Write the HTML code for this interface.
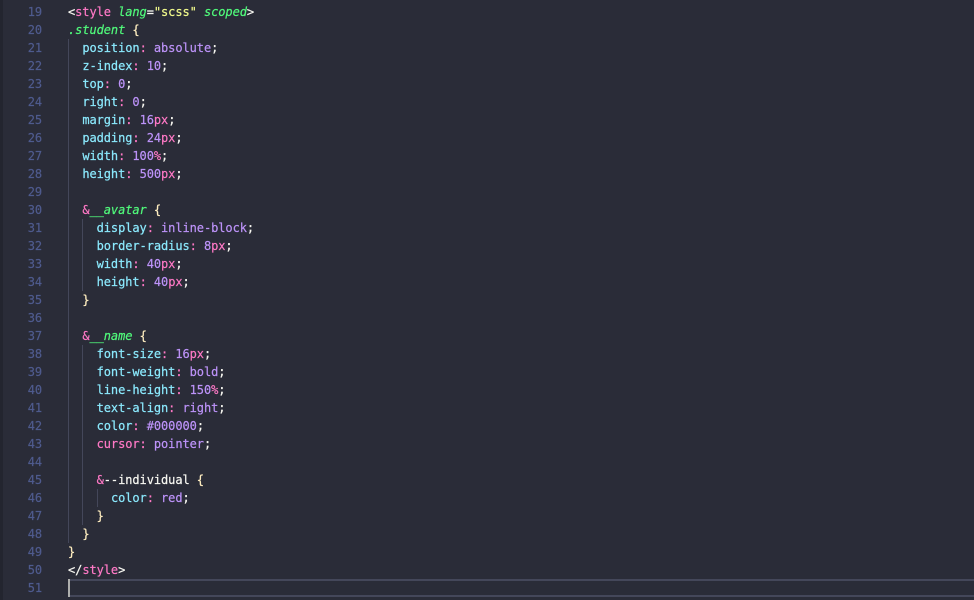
<!DOCTYPE html>
<html>
<head>
<meta charset="utf-8">
<style>
html,body{margin:0;padding:0;width:974px;height:600px;overflow:hidden;background:#2a2c38}
body{position:relative;font-family:"DejaVu Sans Mono","Liberation Mono",monospace;font-size:12px;line-height:18px;letter-spacing:-0.07px;-webkit-text-stroke:0.2px}
.strip{position:absolute;left:0;top:0;width:3px;height:600px;background:#23252f}
.n{position:absolute;left:14px;width:28px;text-align:right;color:#4f5b8e}
.l{position:absolute;left:68px;white-space:pre;color:#f8f8f2}
.c{color:#8be9fd}.v{color:#bd93f9}.p{color:#ff79c6}.g{color:#50fa7b;font-style:italic}.y{color:#f1fa8c}.o{color:#ffeec0}.w{color:#f8f8f2}
.guide{position:absolute;width:1px;background:#44475a}
.ab{position:absolute;left:70px;right:0;height:2px;background:#44475a}
.cur{position:absolute;left:68px;top:579px;width:2px;height:18px;background:#aeafad}
</style>
</head>
<body>
<div class="strip"></div>
<div class="guide" style="left:68px;top:39px;height:504px"></div>
<div class="guide" style="left:82px;top:219px;height:72px"></div>
<div class="guide" style="left:82px;top:345px;height:180px"></div>
<div class="guide" style="left:97px;top:489px;height:18px"></div>
<div class="ab" style="top:579px"></div>
<div class="ab" style="top:595px"></div>
<div class="cur"></div>

<div class="n" style="top:3px">19</div><div class="l" style="top:3px">&lt;<span class="p">style</span> <span class="g">lang</span>=<span class="y">"scss"</span> <span class="g">scoped</span>&gt;</div>
<div class="n" style="top:21px">20</div><div class="l" style="top:21px"><span class="g">.student</span> <span class="o">{</span></div>
<div class="n" style="top:39px">21</div><div class="l" style="top:39px">  <span class="c">position</span><span class="p">:</span> <span class="v">absolute</span>;</div>
<div class="n" style="top:57px">22</div><div class="l" style="top:57px">  <span class="c">z-index</span><span class="p">:</span> <span class="v">10</span>;</div>
<div class="n" style="top:75px">23</div><div class="l" style="top:75px">  <span class="c">top</span><span class="p">:</span> <span class="v">0</span>;</div>
<div class="n" style="top:93px">24</div><div class="l" style="top:93px">  <span class="c">right</span><span class="p">:</span> <span class="v">0</span>;</div>
<div class="n" style="top:111px">25</div><div class="l" style="top:111px">  <span class="c">margin</span><span class="p">:</span> <span class="v">16</span><span class="p">px</span>;</div>
<div class="n" style="top:129px">26</div><div class="l" style="top:129px">  <span class="c">padding</span><span class="p">:</span> <span class="v">24</span><span class="p">px</span>;</div>
<div class="n" style="top:147px">27</div><div class="l" style="top:147px">  <span class="c">width</span><span class="p">:</span> <span class="v">100</span><span class="p">%</span>;</div>
<div class="n" style="top:165px">28</div><div class="l" style="top:165px">  <span class="c">height</span><span class="p">:</span> <span class="v">500</span><span class="p">px</span>;</div>
<div class="n" style="top:183px">29</div>
<div class="n" style="top:201px">30</div><div class="l" style="top:201px">  <span class="p">&amp;</span><span class="g">__avatar</span> <span class="o">{</span></div>
<div class="n" style="top:219px">31</div><div class="l" style="top:219px">    <span class="c">display</span><span class="p">:</span> <span class="v">inline-block</span>;</div>
<div class="n" style="top:237px">32</div><div class="l" style="top:237px">    <span class="c">border-radius</span><span class="p">:</span> <span class="v">8</span><span class="p">px</span>;</div>
<div class="n" style="top:255px">33</div><div class="l" style="top:255px">    <span class="c">width</span><span class="p">:</span> <span class="v">40</span><span class="p">px</span>;</div>
<div class="n" style="top:273px">34</div><div class="l" style="top:273px">    <span class="c">height</span><span class="p">:</span> <span class="v">40</span><span class="p">px</span>;</div>
<div class="n" style="top:291px">35</div><div class="l" style="top:291px">  <span class="o">}</span></div>
<div class="n" style="top:309px">36</div>
<div class="n" style="top:327px">37</div><div class="l" style="top:327px">  <span class="p">&amp;</span><span class="g">__name</span> <span class="o">{</span></div>
<div class="n" style="top:345px">38</div><div class="l" style="top:345px">    <span class="c">font-size</span><span class="p">:</span> <span class="v">16</span><span class="p">px</span>;</div>
<div class="n" style="top:363px">39</div><div class="l" style="top:363px">    <span class="c">font-weight</span><span class="p">:</span> <span class="v">bold</span>;</div>
<div class="n" style="top:381px">40</div><div class="l" style="top:381px">    <span class="c">line-height</span><span class="p">:</span> <span class="v">150</span><span class="p">%</span>;</div>
<div class="n" style="top:399px">41</div><div class="l" style="top:399px">    <span class="c">text-align</span><span class="p">:</span> <span class="v">right</span>;</div>
<div class="n" style="top:417px">42</div><div class="l" style="top:417px">    <span class="c">color</span><span class="p">:</span> <span class="v">#000000</span>;</div>
<div class="n" style="top:435px">43</div><div class="l" style="top:435px">    <span class="p">cursor:</span> <span class="v">pointer</span>;</div>
<div class="n" style="top:453px">44</div>
<div class="n" style="top:471px">45</div><div class="l" style="top:471px">    <span class="p">&amp;</span>--individual <span class="o">{</span></div>
<div class="n" style="top:489px">46</div><div class="l" style="top:489px">      <span class="c">color</span><span class="p">:</span> <span class="v">red</span>;</div>
<div class="n" style="top:507px">47</div><div class="l" style="top:507px">    <span class="o">}</span></div>
<div class="n" style="top:525px">48</div><div class="l" style="top:525px">  <span class="o">}</span></div>
<div class="n" style="top:543px">49</div><div class="l" style="top:543px"><span class="o">}</span></div>
<div class="n" style="top:561px">50</div><div class="l" style="top:561px">&lt;/<span class="p">style</span>&gt;</div>
<div class="n" style="top:579px">51</div>
</body>
</html>
